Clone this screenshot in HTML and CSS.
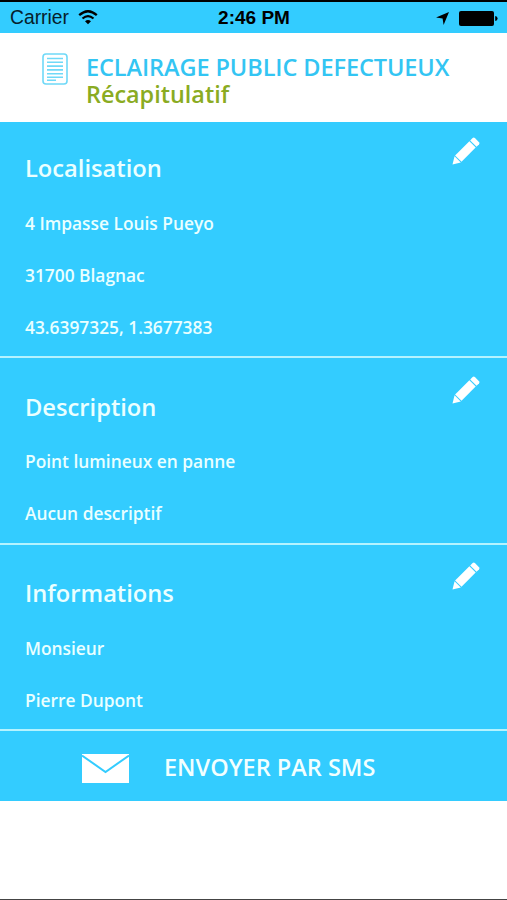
FILE: index.html
```
<!DOCTYPE html>
<html lang="fr">
<head>
    <meta charset="UTF-8">
    <meta name="viewport" content="width=device-width, initial-scale=1.0">
    <title>Récapitulatif</title>
    <link rel="stylesheet" href="styles.css">
</head>
<body>
    <svg width="0" height="0" class="defs">
        <symbol id="pencil" viewBox="0 0 28 28">
            <path d="M.5 27.5 L2.6 19.2 L8.8 25.4 Z"/>
            <path d="M3.1 18.4 L17.4 4.3 L23.7 10.6 L9.5 24.8 Z"/>
            <path d="M18.2 3.5 L20.6 1.1 Q21.8 .1 22.9 1.1 L27 5.2 Q28 6.3 27 7.4 L24.5 9.8 Z"/>
        </symbol>
    </svg>
    <div class="status">
        <div class="carrier">
            <span>Carrier</span>
            <svg class="wifi" width="20" height="15" viewBox="0 0 20 15">
                <path d="M1.2 5.2 Q10 -2.8 18.8 5.2" stroke-width="2.3"/>
                <path d="M4.5 8.5 Q10 3.6 15.5 8.5" stroke-width="2.2"/>
                <path class="dot" d="M7 11.2 Q10 8.6 13 11.2 L10 14.2 Z"/>
            </svg>
        </div>
        <div class="time">2:46 PM</div>
        <div class="battery">
            <svg width="13" height="13" viewBox="0 0 13 13"><path d="M13 0 L7.6 13 L6.6 6.4 L0 5.4 Z"/></svg>
            <svg width="39" height="15" viewBox="0 0 39 15">
                <rect x="0" y="0" width="35" height="15" rx="2"/>
                <path d="M36.2 5 Q38.6 5.4 38.6 7.5 Q38.6 9.6 36.2 10 Z"/>
            </svg>
        </div>
    </div>
    <header>
        <svg class="doc" width="26" height="32" viewBox="0 0 26 32">
            <rect x="1" y="1" width="24" height="30" rx="3"/>
            <path d="M5 5.5H21M5 9.3H21M5 13.1H21M5 16.9H21M5 20.7H21M5 24.3H21M5 27.2H14"/>
        </svg>
        <div>
            <h1>ECLAIRAGE PUBLIC DEFECTUEUX</h1>
            <div class="subtitle">Récapitulatif</div>
        </div>
    </header>
    <section class="first">
        <div class="content">
            <h2>Localisation</h2>
            <p>4 Impasse Louis Pueyo</p>
            <p>31700 Blagnac</p>
            <p>43.6397325, 1.3677383</p>
        </div>
        <svg class="edit"><use href="#pencil"/></svg>
    </section>
    <section class="middle">
        <div class="content">
            <h2>Description</h2>
            <p>Point lumineux en panne</p>
            <p>Aucun descriptif</p>
        </div>
        <svg class="edit"><use href="#pencil"/></svg>
    </section>
    <section>
        <div class="content">
            <h2>Informations</h2>
            <p>Monsieur</p>
            <p>Pierre Dupont</p>
        </div>
        <svg class="edit"><use href="#pencil"/></svg>
    </section>
    <div class="send">
        <svg width="47" height="29" viewBox="0 0 47 29">
            <rect width="47" height="29"/>
            <path d="M0 1.5 L23.5 18 L47 1.5"/>
        </svg>
        <span>ENVOYER PAR SMS</span>
    </div>
</body>
</html>
```
FILE: styles.css
```
*{
    margin: 0;
    padding: 0;
    box-sizing: border-box;
}
body{
    width: 100%;
    height: 100vh;
    background-color: #fff;
    border-bottom: 1px solid #444;
    font-family: 'Open Sans', sans-serif;
    font-weight: 600;
    overflow: hidden;
}
svg{
    display: block;
    flex-shrink: 0;
}
.defs{
    position: absolute;
}
.status{
    display: grid;
    grid-template-columns: 1fr auto 1fr;
    align-items: center;
    height: 33px;
    padding: 1px 9px 0 10px;
    border-top: 2px solid #000;
    background-color: #33ccff;
    color: #06202b;
    font-family: 'Liberation Sans', Arial, sans-serif;
    font-weight: 400;
    font-size: 19.3px;
}
.carrier{
    display: flex;
    align-items: center;
    gap: 9px;
}
.wifi{
    fill: none;
    stroke: #000;
    margin-top: -2px;
}
.wifi .dot{
    fill: #000;
    stroke: none;
}
.time{
    font-weight: 700;
    font-size: 19px;
    color: #000;
}
.battery{
    display: flex;
    justify-content: flex-end;
    align-items: center;
    gap: 10px;
}
header{
    display: flex;
    height: 89px;
    padding: 20px 0 0 42px;
    gap: 18px;
}
.doc{
    fill: none;
    stroke: #6fd9f8;
    stroke-width: 1.6;
}
h1{
    font-size: 23.5px;
    font-weight: 600;
    line-height: 28px;
    letter-spacing: -0.08px;
    color: #33c5f3;
}
.subtitle{
    font-size: 23.4px;
    line-height: 27px;
    color: #8aab22;
}
section{
    display: flex;
    justify-content: space-between;
    align-items: flex-start;
    padding: 32px 27px 3px 25px;
    background-color: #33ccff;
    border-bottom: 2px solid #b4f3ff;
    color: #eaffff;
}
.first{
    padding-top: 30px;
}
.middle{
    padding-top: 33px;
}
h2{
    font-size: 23.7px;
    font-weight: 600;
    line-height: 32px;
    margin-bottom: 13px;
}
.middle h2{
    margin-bottom: 12px;
}
.middle .content{
    padding-bottom: 1px;
}
p{
    font-size: 17.35px;
    line-height: 52px;
}
.edit{
    width: 28px;
    height: 28px;
    margin-top: -15px;
    fill: #fff;
}
.send{
    display: flex;
    align-items: center;
    gap: 35px;
    height: 70px;
    padding: 4px 0 0 82px;
    background-color: #33ccff;
    color: #f2ffff;
    font-size: 23.5px;
}
.send svg{
    fill: #fff;
}
.send path{
    fill: none;
    stroke: #33ccff;
    stroke-width: 2;
}
.send span{
    margin-top: -2px;
}
```
